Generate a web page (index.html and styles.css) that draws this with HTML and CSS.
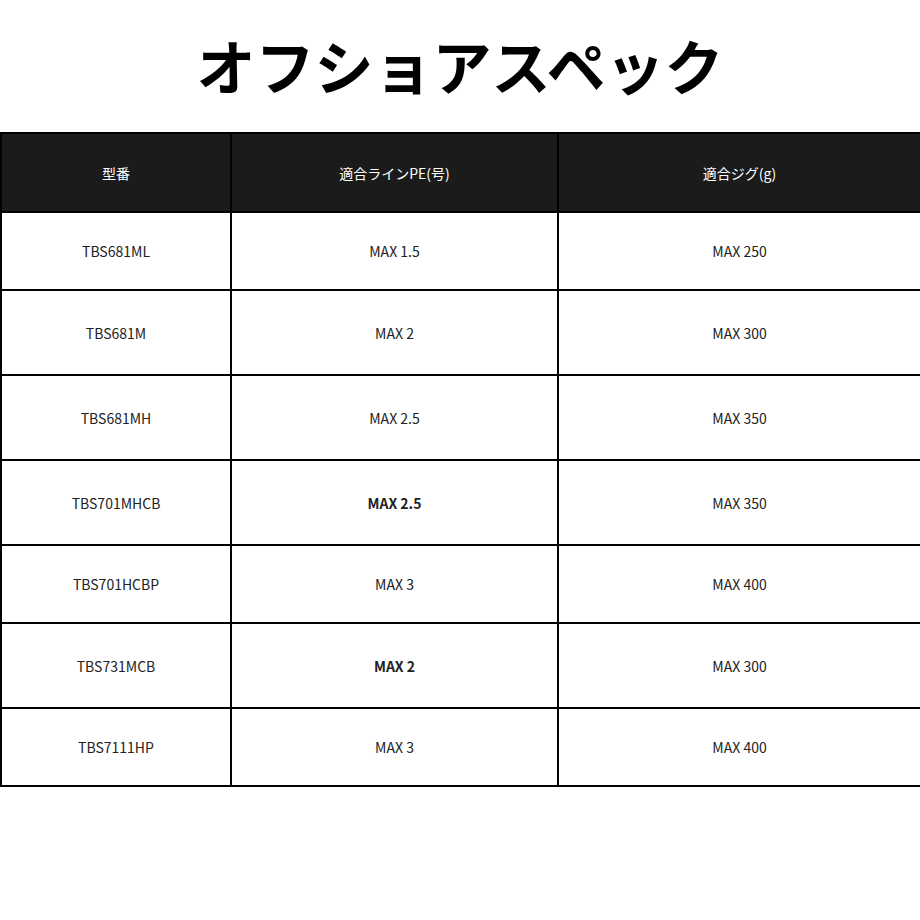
FILE: index.html
```html
<!DOCTYPE html>
<html lang="ja">
<head>
<meta charset="utf-8">
<link rel="stylesheet" href="styles.css">
</head>
<body>
<h1 class="title">オフショアスペック</h1>
<table class="spec">
  <colgroup>
    <col class="c1">
    <col class="c2">
    <col class="c3">
  </colgroup>
  <thead>
    <tr class="head"><th>型番</th><th>適合ラインPE(号)</th><th>適合ジグ(g)</th></tr>
  </thead>
  <tbody>
    <tr class="short"><td>TBS681ML</td><td>MAX 1.5</td><td>MAX 250</td></tr>
    <tr class="tall"><td>TBS681M</td><td>MAX 2</td><td>MAX 300</td></tr>
    <tr class="tall"><td>TBS681MH</td><td>MAX 2.5</td><td>MAX 350</td></tr>
    <tr class="tall"><td>TBS701MHCB</td><td class="b">MAX 2.5</td><td>MAX 350</td></tr>
    <tr class="short"><td>TBS701HCBP</td><td>MAX 3</td><td>MAX 400</td></tr>
    <tr class="tall"><td>TBS731MCB</td><td class="b">MAX 2</td><td>MAX 300</td></tr>
    <tr class="short"><td>TBS7111HP</td><td>MAX 3</td><td>MAX 400</td></tr>
  </tbody>
</table>
</body>
</html>
```
FILE: styles.css
```css
html, body {
  margin: 0;
  padding: 0;
  background: #fff;
}
body {
  font-family: "Noto Sans CJK JP", "Noto Sans", sans-serif;
  color: #222;
}
.title {
  margin: 0;
  height: 132px;
  display: flex;
  align-items: center;
  justify-content: center;
  font-size: 59px;
  font-weight: 700;
  color: #000;
  letter-spacing: 0;
  padding-bottom: 4px;
  box-sizing: border-box;
}
.spec {
  width: 920px;
  border-collapse: collapse;
  table-layout: fixed;
  font-size: 14px;
}
.c1 { width: 230px; }
.c2 { width: 327px; }
.c3 { width: 363px; }
.spec th, .spec td {
  border: 2px solid #000;
  text-align: center;
  vertical-align: middle;
  padding: 0;
}
.spec th {
  background: #1b1b1b;
  color: #fff;
  font-weight: 400;
}
.head { height: 79px; }
.short { height: 78px; }
.tall { height: 85px; }
.last { height: 79px; }
.b { font-weight: 700; }
```
